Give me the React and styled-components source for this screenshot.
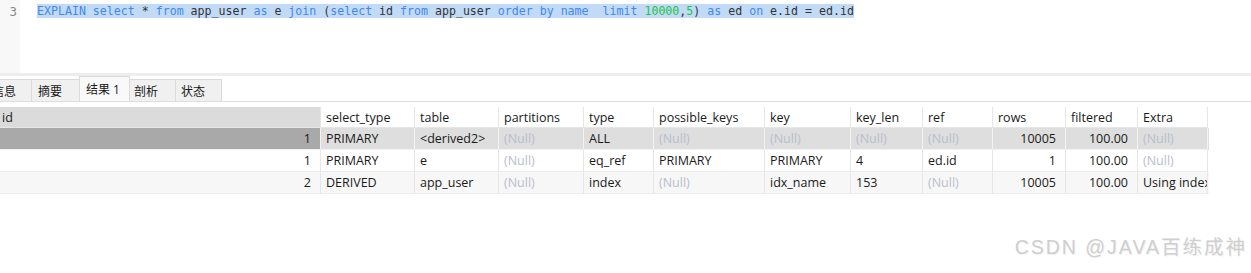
import React from "react";
import styled, { createGlobalStyle } from "styled-components";

const Global = createGlobalStyle`
  html, body { margin: 0; padding: 0; background: #ffffff; }
  body {
    width: 1251px; height: 273px; overflow: hidden;
    font-family: "Open Sans", "Noto Sans CJK SC", sans-serif;
  }
`;

const Page = styled.div`
  position: relative;
  width: 1251px;
  height: 273px;
  overflow: hidden;
  background: #fff;
`;

const Editor = styled.div`
  display: flex;
  height: 73px;
`;

const Gutter = styled.div`
  width: 20px;
  background: #f8f8f8;
  color: #8a8a8a;
  font-family: "DejaVu Sans Mono", monospace;
  font-size: 12.5px;
  line-height: 13px;
  padding-top: 5px;
  box-sizing: border-box;
  text-align: right;
  padding-right: 3px;
`;

const Code = styled.div`
  padding: 5px 0 0 17px;
  font-family: "DejaVu Sans Mono", monospace;
  font-size: 11.6px;
  line-height: 13px;
  white-space: pre;
`;

const Selected = styled.span`
  background: #c1daf6;
  color: #3a3a3a;
`;

const Tok = styled.span`
  color: ${(p) => (p.$k === "kw" ? "#4288f0" : p.$k === "num" ? "#1fc44a" : "#333333")};
`;

const Divider = styled.div`
  height: 3px;
  background: #ededed;
`;

const TabBar = styled.div`
  display: flex;
  align-items: flex-end;
  height: 25px;
  border-bottom: 1px solid #dedede;
  margin-left: -14px;
`;

const Tab = styled.div`
  box-sizing: border-box;
  width: ${(p) => p.$w}px;
  height: ${(p) => (p.$active ? 25 : 22)}px;
  padding: 0 0 0 ${(p) => p.$pl}px;
  display: flex;
  align-items: center;
  font-size: 12px;
  color: #1a1a1a;
  background: ${(p) => (p.$active ? "#f9f9f9" : "#f0f0f0")};
  border: 1px solid #dadada;
  border-bottom: none;
  margin-left: -1px;
`;

const Table = styled.div`
  margin-top: 5px;
  margin-left: -20px;
  width: 1229px;
  font-size: 12.5px;
  color: #1a1a1a;
`;

const COLS = "341px 94px 84px 85px 70px 111px 86px 72px 70px 73px 72px 70px";

const Row = styled.div`
  display: grid;
  grid-template-columns: ${COLS};
  height: ${(p) => (p.$head ? 21 : 22)}px;
  background: ${(p) => p.$bg};
`;

const Cell = styled.div`
  box-sizing: border-box;
  display: flex;
  align-items: center;
  justify-content: ${(p) => (p.$right ? "flex-end" : "flex-start")};
  padding: 0 ${(p) => (p.$right ? 9 : 0)}px 0 ${(p) => p.$pl ?? (p.$right ? 4 : 5)}px;
  border-right: 1px solid ${(p) => p.$line || "#e6e6e6"};
  border-bottom: 1px solid ${(p) => p.$line || "#ececec"};
  background: ${(p) => p.$bg || "transparent"};
  color: ${(p) => (p.$null ? "#b9bdcc" : "#1a1a1a")};
  white-space: nowrap;
  overflow: hidden;
`;

const Watermark = styled.div`
  position: absolute;
  right: 4px;
  bottom: 13px;
  font-family: "Liberation Sans", "Noto Sans CJK SC", sans-serif;
  font-size: 19.5px;
  letter-spacing: 2px;
  color: #cfcfcf;
  text-shadow: 1px 1px 0 #f2f2f2;
`;

const code = [
  ["EXPLAIN", "kw"], [" "], ["select", "kw"], [" * "], ["from", "kw"], [" app_user "],
  ["as", "kw"], [" e "], ["join", "kw"], [" ("], ["select", "kw"], [" id "], ["from", "kw"],
  [" app_user "], ["order", "kw"], [" "], ["by", "kw"], [" "], ["name", "kw"], ["  "],
  ["limit", "kw"], [" "], ["10000", "num"], [","], ["5", "num"], [") "], ["as", "kw"],
  [" ed "], ["on", "kw"], [" e.id = ed.id"],
];

const headers = ["id", "select_type", "table", "partitions", "type", "possible_keys", "key", "key_len", "ref", "rows", "filtered", "Extra"];
const rightCols = new Set([0, 9, 10]);
const N = "(Null)";
const rows = [
  ["1", "PRIMARY", "<derived2>", N, "ALL", N, N, N, N, "10005", "100.00", N],
  ["1", "PRIMARY", "e", N, "eq_ref", "PRIMARY", "PRIMARY", "4", "ed.id", "1", "100.00", N],
  ["2", "DERIVED", "app_user", N, "index", N, "idx_name", "153", N, "10005", "100.00", "Using index"],
];
const rowBg = ["#dedede", "#ffffff", "#f7f7f7"];

const tabs = [
  { t: "信息", w: 47, pl: 6 },
  { t: "摘要", w: 49, pl: 6 },
  { t: "结果 1", w: 51, pl: 6, active: true },
  { t: "剖析", w: 47, pl: 4 },
  { t: "状态", w: 47, pl: 5 },
];

export default function App() {
  return (
    <Page>
      <Global />
      <Editor>
        <Gutter>3</Gutter>
        <Code>
          <Selected>
            {code.map(([s, k], i) => (
              <Tok key={i} $k={k}>{s}</Tok>
            ))}
          </Selected>
        </Code>
      </Editor>
      <Divider />
      <TabBar>
        {tabs.map((t) => (
          <Tab key={t.t} $w={t.w} $pl={t.pl} $active={t.active}>{t.t}</Tab>
        ))}
      </TabBar>
      <Table>
        <Row $head $bg="#ffffff">
          {headers.map((h, i) => (
            <Cell key={h} $pl={i === 0 ? 22 : undefined} $bg={i === 0 ? "#dbdbdb" : undefined} $line="#e6e6e6">{h}</Cell>
          ))}
        </Row>
        {rows.map((r, ri) => (
          <Row key={ri} $bg={rowBg[ri]}>
            {r.map((v, ci) => (
              <Cell
                key={ci}
                $right={rightCols.has(ci)}
                $null={v === N}
                $bg={ri === 0 && ci === 0 ? "#a9a9a9" : undefined}
                $line={ri === 0 ? "#f2f2f2" : undefined}
              >
                {v}
              </Cell>
            ))}
          </Row>
        ))}
      </Table>
      <Watermark>CSDN @JAVA百练成神</Watermark>
    </Page>
  );
}
